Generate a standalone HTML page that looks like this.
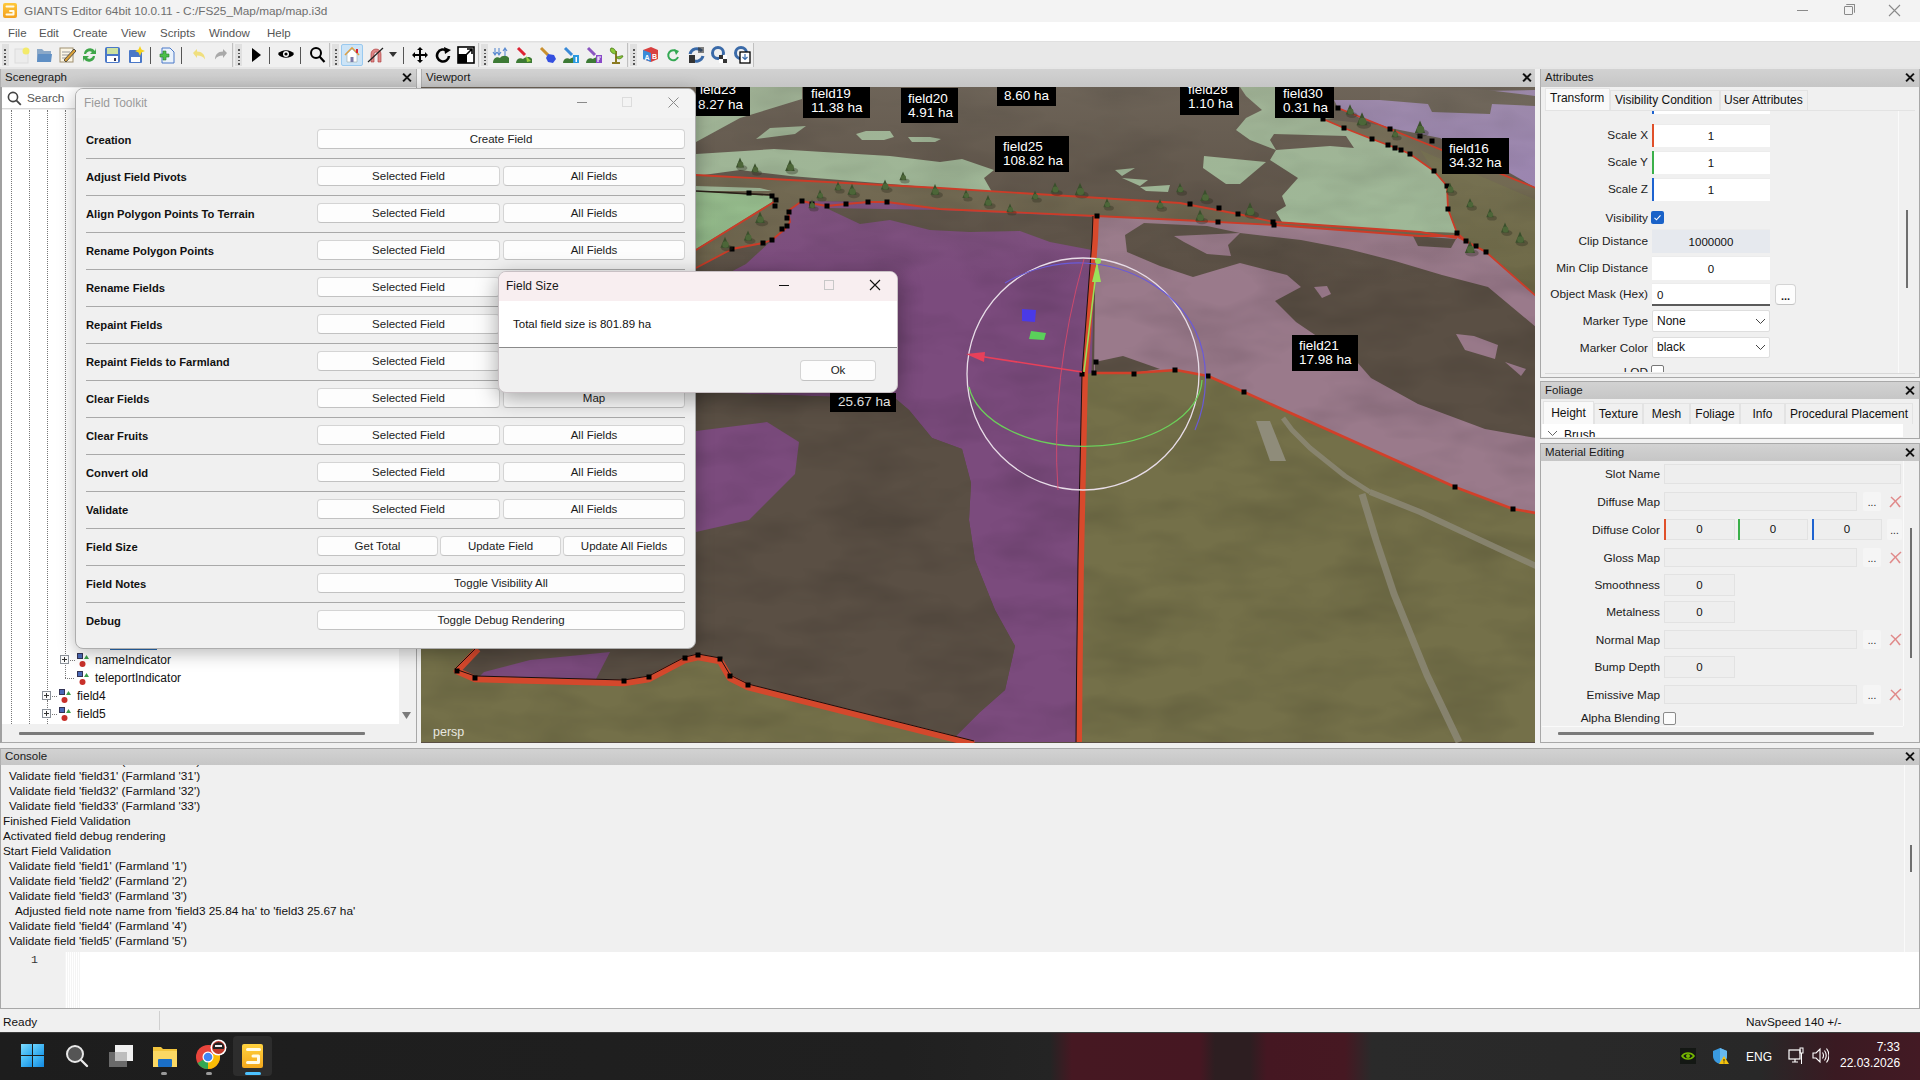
<!DOCTYPE html>
<html><head><meta charset="utf-8"><title>GIANTS Editor</title>
<style>
*{margin:0;padding:0;box-sizing:border-box}
html,body{width:1920px;height:1080px;overflow:hidden;background:#f0f0f0;font-family:"Liberation Sans",sans-serif;font-size:11.5px;color:#000}
.a{position:absolute}
.t{position:absolute;white-space:nowrap;line-height:14px}
.dh{position:absolute;height:18px;background:linear-gradient(#d2d2d2,#c6c6c6);color:#1a1a1a;border-top:1px solid #a9a9a9;border-left:1px solid #b0b0b0;border-right:1px solid #b0b0b0}
.dh span{position:absolute;left:4px;top:2px;font-size:11.5px}
.dx{position:absolute;top:4px;width:9px;height:9px}
.dx:before,.dx:after{content:"";position:absolute;left:3.5px;top:-1px;width:2px;height:11px;background:#111;transform:rotate(45deg)}
.dx:after{transform:rotate(-45deg)}
.btn{position:absolute;height:20px;background:#fdfdfd;border:1px solid #d4d4d4;border-bottom-color:#c2c2c2;border-radius:4px;text-align:center;line-height:19px;font-size:11.5px;color:#1b1b1b}
.lbl{position:absolute;font-weight:bold;font-size:11.2px;color:#111;white-space:nowrap}
.sep{position:absolute;height:1px;background:#a9a9a9}
.rl{position:absolute;text-align:right;white-space:nowrap;color:#1b1b1b}
.inp{position:absolute;background:#fff;border:1px solid #e3e3e3;text-align:center;line-height:20px;color:#1b1b1b}
.dis{position:absolute;background:#eeeeee;border:1px solid #e2e2e2;text-align:center;line-height:20px;color:#1b1b1b}
.tbi{position:absolute;top:46px;width:17px;height:17px}
.tsep{position:absolute;top:45px;width:1px;height:20px;background:#c8c8c8}
.th{position:absolute;top:46px;width:2px;height:18px;background:repeating-linear-gradient(#555 0 1.5px,transparent 1.5px 3.5px)}
.cl{position:absolute;left:3px;white-space:nowrap;color:#1b1b1b;font-size:11.5px}
.tab{position:absolute;height:22px;border:1px solid #e2e2e2;border-bottom:none;background:#f0f0f0;color:#1b1b1b;text-align:center;line-height:20px}

</style></head><body>
<!-- title bar -->
<div class="a" style="left:0;top:0;width:1920px;height:22px;background:#f3f3f3"></div>
<div class="a" style="left:3px;top:3px;width:14px;height:15px;background:linear-gradient(#ffc83a,#f2a01e);border-radius:2px"></div>
<svg class="a" style="left:3px;top:3px" width="14" height="15"><path d="M3.5 3.5H10.5M7 8H10.5V11.5H3.5" fill="none" stroke="#fffbe8" stroke-width="2" stroke-linecap="round" stroke-linejoin="round"/></svg>
<div class="t" style="left:24px;top:4px;font-size:11.8px;color:#6e6e6e">GIANTS Editor 64bit 10.0.11 - C:/FS25_Map/map/map.i3d</div>
<div class="a" style="left:1797px;top:10px;width:11px;height:1px;background:#8a8a8a"></div>
<div class="a" style="left:1844px;top:6px;width:9px;height:9px;border:1px solid #8a8a8a;border-radius:1px"></div>
<div class="a" style="left:1846px;top:4px;width:9px;height:9px;border-top:1px solid #8a8a8a;border-right:1px solid #8a8a8a;border-radius:1px"></div>
<svg class="a" style="left:1888px;top:4px" width="13" height="13"><path d="M1 1L12 12M12 1L1 12" stroke="#8a8a8a" stroke-width="1.1"/></svg>
<!-- menu bar -->
<div class="a" style="left:0;top:22px;width:1920px;height:19px;background:#ffffff"></div>
<div class="t" style="left:8px;top:26px;color:#555">File</div>
<div class="t" style="left:39px;top:26px;color:#555">Edit</div>
<div class="t" style="left:73px;top:26px;color:#555">Create</div>
<div class="t" style="left:121px;top:26px;color:#555">View</div>
<div class="t" style="left:160px;top:26px;color:#555">Scripts</div>
<div class="t" style="left:209px;top:26px;color:#555">Window</div>
<div class="t" style="left:267px;top:26px;color:#555">Help</div>
<!-- toolbar background -->
<div class="a" style="left:0;top:41px;width:1920px;height:28px;background:#e8e8e8;border-top:1px solid #e0e0e0"></div>
<!-- dock headers -->
<div class="dh" style="left:0;top:68px;width:417px;height:19px"><span>Scenegraph</span><i class="dx" style="left:401px"></i></div>
<div class="dh" style="left:421px;top:68px;width:1115px;height:19px"><span>Viewport</span><i class="dx" style="left:1100px"></i></div>
<div class="dh" style="left:1540px;top:68px;width:380px;height:19px"><span>Attributes</span><i class="dx" style="left:364px"></i></div>

<!-- toolbar groups -->
<div class="a" style="left:0;top:43px;width:233px;height:24px;background:#f0f0f0;border-right:1px solid #c0c0c0"></div>
<div class="a" style="left:234px;top:43px;width:96px;height:24px;background:#f0f0f0;border-right:1px solid #c0c0c0"></div>
<div class="a" style="left:331px;top:43px;width:148px;height:24px;background:#f0f0f0;border-right:1px solid #c0c0c0"></div>
<div class="a" style="left:480px;top:43px;width:148px;height:24px;background:#f0f0f0;border-right:1px solid #c0c0c0"></div>
<div class="a" style="left:629px;top:43px;width:125px;height:24px;background:#f0f0f0;border-right:1px solid #c0c0c0"></div>
<div class="a" style="left:0;top:67px;width:1920px;height:2px;background:#e6e6e6"></div>
<!-- handles -->
<div class="a" style="left:2px;top:44px;width:7px;height:22px;background:#e0e0e0"></div>
<div class="th" style="left:4px;top:49px;height:16px"></div>
<div class="a" style="left:235px;top:44px;width:7px;height:22px;background:#e0e0e0"></div>
<div class="th" style="left:238px;top:49px;height:16px"></div>
<div class="a" style="left:332px;top:44px;width:7px;height:22px;background:#e0e0e0"></div>
<div class="th" style="left:335px;top:49px;height:16px"></div>
<div class="a" style="left:481px;top:44px;width:7px;height:22px;background:#e0e0e0"></div>
<div class="th" style="left:484px;top:49px;height:16px"></div>
<div class="a" style="left:630px;top:44px;width:7px;height:22px;background:#e0e0e0"></div>
<div class="th" style="left:633px;top:49px;height:16px"></div>
<!-- separators -->
<div class="tsep" style="left:150px;top:47px;height:17px;background:#555"></div>
<div class="tsep" style="left:181px;top:47px;height:17px;background:#555"></div>
<div class="tsep" style="left:269px;top:47px;height:17px;background:#555"></div>
<div class="tsep" style="left:300px;top:47px;height:17px;background:#555"></div>
<div class="tsep" style="left:403px;top:47px;height:17px;background:#555"></div>
<!-- icons group 1 -->
<svg class="a" style="left:14px;top:46px" width="17" height="18"><rect x="1" y="3" width="13" height="14" fill="#ececec" stroke="#dcdcdc"/><circle cx="12" cy="5" r="3.5" fill="#f3ea6a"/></svg>
<svg class="a" style="left:36px;top:46px" width="17" height="18"><path d="M1 3h5l2 2h7v11H1z" fill="#8aa8c8"/><path d="M2 8h14l-1 8H1z" fill="#5f8fc4"/></svg>
<svg class="a" style="left:59px;top:46px" width="17" height="18"><rect x="1" y="2" width="13" height="14" fill="#fbf6e6" stroke="#a09070"/><path d="M3 6h8M3 9h7M3 12h6" stroke="#999"/><path d="M5 14L15 3l2 2L7 16z" fill="#d9a13a" stroke="#333" stroke-width=".8"/></svg>
<svg class="a" style="left:81px;top:46px" width="17" height="18"><path d="M3 8a6 6 0 0 1 11-3l1-3v6h-6l2-2a4 4 0 0 0-6 2z" fill="#3fa64a"/><path d="M14 10a6 6 0 0 1-11 3l-1 3v-6h6l-2 2a4 4 0 0 0 6-2z" fill="#3fa64a"/></svg>
<svg class="a" style="left:104px;top:46px" width="17" height="18"><rect x="1" y="1" width="15" height="16" rx="2" fill="#4a78c8"/><rect x="3" y="2" width="11" height="6" fill="#cde2a0"/><rect x="3" y="10" width="11" height="6" fill="#fff"/><rect x="10" y="12" width="2" height="3" fill="#335"/></svg>
<svg class="a" style="left:128px;top:46px" width="17" height="18"><rect x="1" y="4" width="13" height="13" rx="1" fill="#4a78c8"/><rect x="3" y="11" width="9" height="5" fill="#fff"/><path d="M12 0l1.5 3.5L17 5l-3.5 1.5L12 10l-1.5-3.5L7 5l3.5-1.5z" fill="#f5d320"/></svg>
<svg class="a" style="left:158px;top:46px" width="17" height="18"><path d="M4 2h8l4 4v11H4z" fill="#eaf2fb" stroke="#4a78c8"/><path d="M5 5h3v3h3v3H8v3H5v-3H2V8h3z" fill="#4bbf4b" stroke="#2a7a2a" stroke-width=".6"/></svg>
<svg class="a" style="left:190px;top:46px" width="17" height="18"><path d="M3 7l4-4v2.5c5 0 8 3 8 8-2-3-4-4-8-4V12z" fill="#f0dc6a" opacity=".85"/></svg>
<svg class="a" style="left:213px;top:46px" width="17" height="18"><path d="M14 7l-4-4v2.5c-5 0-8 3-8 8 2-3 4-4 8-4V12z" fill="#a9a9a9"/></svg>
<!-- group 2 -->
<svg class="a" style="left:251px;top:47px" width="11" height="16"><path d="M1 1l9 7-9 7z" fill="#000"/></svg>
<svg class="a" style="left:277px;top:48px" width="18" height="12"><path d="M1 6c3-5 13-5 16 0-3 5-13 5-16 0z" fill="#000"/><circle cx="9" cy="6" r="3" fill="#fff"/><circle cx="9" cy="6" r="1.6" fill="#000"/></svg>
<svg class="a" style="left:309px;top:46px" width="17" height="18"><circle cx="7" cy="7" r="5" fill="none" stroke="#000" stroke-width="2"/><path d="M10.5 10.5l5 5.5" stroke="#000" stroke-width="2.2"/></svg>
<!-- group 3 -->
<div class="a" style="left:341px;top:44px;width:22px;height:22px;background:#cce4f7;border:1px solid #99c9ef;border-radius:2px"></div>
<svg class="a" style="left:343px;top:46px" width="18" height="18"><path d="M2 9L9 2l7 7" fill="none" stroke="#e0a040" stroke-width="1.6"/><path d="M4 8v8h10V8L9 3z" fill="#fff" stroke="#9aa" stroke-width=".6"/><rect x="7.5" y="11" width="3" height="5" fill="#7a7aa8"/><rect x="13" y="3" width="2" height="4" fill="#d23"/></svg>
<svg class="a" style="left:367px;top:46px" width="17" height="18"><path d="M4 16V8a5 5 0 0 1 10 0v8h-3V8a2 2 0 0 0-4 0v8z" fill="#d88" stroke="#a33" stroke-width=".6"/><path d="M1 16L16 2" stroke="#222" stroke-width="1.2"/></svg>
<svg class="a" style="left:389px;top:52px" width="9" height="6"><path d="M0 0h8L4 5z" fill="#333"/></svg>
<svg class="a" style="left:411px;top:46px" width="18" height="18"><path d="M9 1l3 3h-2v4h4V6l3 3-3 3v-2h-4v4h2l-3 3-3-3h2v-4H4v2L1 9l3-3v2h4V4H6z" fill="#000"/></svg>
<svg class="a" style="left:435px;top:46px" width="17" height="18"><path d="M12 5A6 6 0 1 0 14 10" fill="none" stroke="#000" stroke-width="2.6"/><path d="M9 1l7 3-6 4z" fill="#000"/></svg>
<svg class="a" style="left:457px;top:46px" width="18" height="18"><rect x="1" y="1" width="16" height="16" fill="#fff" stroke="#000" stroke-width="1.6"/><path d="M1 17V8h9v9z" fill="#000"/><path d="M7 11l8-8M10 3h5v5" fill="none" stroke="#000" stroke-width="1.6"/></svg>
<!-- group 4 -->
<svg class="a" style="left:492px;top:46px" width="18" height="18"><path d="M1 17c0-5 4-7 7-5 2-3 7-3 9 0v5z" fill="#3d7a35"/><path d="M3 2v6M1 6l2 3 2-3M7 2v6M5 6l2 3 2-3M13 10V3M11 5l2-3 2 3" fill="none" stroke="#5a8ad0" stroke-width="1.1"/></svg>
<svg class="a" style="left:515px;top:46px" width="18" height="18"><path d="M1 17c0-4 4-6 7-4 2-2 7-3 9 0v4z" fill="#3d7a35"/><path d="M3 2l7 7" stroke="#d23" stroke-width="3"/><path d="M11 10l5 5-4 1z" fill="#9ad040"/></svg>
<svg class="a" style="left:539px;top:46px" width="18" height="18"><path d="M2 2l7 7" stroke="#c99030" stroke-width="3"/><path d="M9 8l6 1 2 4-3 4-5-1-2-4z" fill="#3550e0"/></svg>
<svg class="a" style="left:562px;top:46px" width="18" height="18"><path d="M1 17c0-4 4-6 7-4 2-2 5-2 6 0v4z" fill="#3d7a35"/><path d="M3 2l7 7" stroke="#3a8ad8" stroke-width="3"/><rect x="11" y="9" width="6" height="8" fill="#2a9ae0"/><rect x="13.5" y="11" width="1.5" height="5" fill="#fff"/></svg>
<svg class="a" style="left:585px;top:46px" width="18" height="18"><path d="M1 17c0-4 4-6 7-4 2-2 5-2 6 0v4z" fill="#3d7a35"/><path d="M3 2l7 7" stroke="#8a55c0" stroke-width="3"/><rect x="11" y="9" width="6" height="8" fill="#8a4ac8"/><path d="M13 16v-5h3M13 13h2" stroke="#fff" stroke-width="1.2" fill="none"/></svg>
<svg class="a" style="left:608px;top:46px" width="17" height="18"><path d="M4 17h8M8 17V5" stroke="#8a7a20" stroke-width="2"/><path d="M8 8c-4 0-7-3-5-6 3 0 5 2 5 6zM8 11c3 0 6-2 7-1-1 3-5 4-7 1z" fill="#8ac838" stroke="#4a7a18" stroke-width=".8"/></svg>
<!-- group 5 -->
<svg class="a" style="left:642px;top:46px" width="17" height="17"><path d="M1 4l8-3 7 3v9l-7 3-8-3z" fill="#d84040"/><path d="M1 4l8 3v9l-8-3z" fill="#3a8ad8"/><text x="2.5" y="14" font-size="7" fill="#fff" font-weight="bold" font-family="Liberation Sans">A</text><text x="10" y="13" font-size="7" fill="#fff" font-weight="bold" font-family="Liberation Sans">B</text></svg>
<svg class="a" style="left:666px;top:48px" width="14" height="14"><path d="M11 4A5 5 0 1 0 12 9" fill="none" stroke="#34a853" stroke-width="2"/><path d="M8 1l5 2-3 4z" fill="#34a853"/></svg>
<svg class="a" style="left:688px;top:46px" width="17" height="18"><path d="M2 8a7 7 0 0 1 12-3" fill="none" stroke="#3a6aa8" stroke-width="3"/><path d="M15 10a7 7 0 0 1-12 3" fill="none" stroke="#3a6aa8" stroke-width="3"/><rect x="1" y="9" width="6" height="8" fill="#333"/><rect x="10" y="1" width="6" height="6" fill="#333" opacity=".6"/></svg>
<svg class="a" style="left:711px;top:46px" width="17" height="18"><circle cx="7" cy="7" r="5.5" fill="none" stroke="#3a6aa8" stroke-width="3"/><rect x="8" y="9" width="8" height="8" fill="#fff"/><path d="M8 9h4v4H8zM12 13h4v4h-4z" fill="#333"/></svg>
<svg class="a" style="left:734px;top:46px" width="17" height="18"><circle cx="7" cy="7" r="5.5" fill="none" stroke="#3a6aa8" stroke-width="3"/><rect x="6" y="6" width="10" height="11" fill="#fff" stroke="#000" stroke-width="1.3"/><path d="M11 8v5M8.5 11l2.5 2.5 2.5-2.5" fill="none" stroke="#3a6aa8" stroke-width="1.2"/></svg>

<!-- scenegraph panel -->
<div class="a" style="left:0;top:87px;width:417px;height:656px;background:#f0f0f0;border-left:2px solid #a0a0a0;border-right:1px solid #a8a8a8;border-bottom:1px solid #a8a8a8"></div>
<div class="a" style="left:2px;top:88px;width:398px;height:21px;background:#fff;border-bottom:1px solid #d8d8d8"></div>
<svg class="a" style="left:7px;top:91px" width="15" height="15"><circle cx="6" cy="6" r="4.6" fill="none" stroke="#444" stroke-width="1.6"/><path d="M9.3 9.3l4.5 4.5" stroke="#444" stroke-width="1.8"/></svg>
<div class="t" style="left:27px;top:91px;color:#555;font-size:11.8px">Search</div>
<div class="a" style="left:2px;top:110px;width:397px;height:614px;background:#fff"></div>
<div class="a" style="left:11px;top:110px;width:1px;height:614px;border-left:1px dotted #777"></div>
<div class="a" style="left:29px;top:110px;width:1px;height:614px;border-left:1px dotted #777"></div>
<div class="a" style="left:47px;top:110px;width:1px;height:582px;border-left:1px dotted #777"></div>
<div class="a" style="left:47px;top:700px;width:1px;height:24px;border-left:1px dotted #777"></div>
<div class="a" style="left:65px;top:110px;width:1px;height:568px;border-left:1px dotted #777"></div>
<div class="a" style="left:65px;top:678px;width:9px;height:1px;border-top:1px dotted #777"></div>
<div class="a" style="left:70px;top:660px;width:5px;height:1px;border-top:1px dotted #777"></div>
<div class="a" style="left:52px;top:696px;width:5px;height:1px;border-top:1px dotted #777"></div>
<div class="a" style="left:52px;top:714px;width:5px;height:1px;border-top:1px dotted #777"></div>
<div class="a" style="left:110px;top:647px;width:47px;height:3px;background:#2a6bb0"></div>
<!-- expanders -->
<div class="a" style="left:60px;top:655px;width:9px;height:9px;border:1px solid #8a9098;background:#fbfbfb"></div>
<div class="a" style="left:62px;top:659px;width:5px;height:1px;background:#333"></div><div class="a" style="left:64px;top:657px;width:1px;height:5px;background:#333"></div>
<div class="a" style="left:42px;top:691px;width:9px;height:9px;border:1px solid #8a9098;background:#fbfbfb"></div>
<div class="a" style="left:44px;top:695px;width:5px;height:1px;background:#333"></div><div class="a" style="left:46px;top:693px;width:1px;height:5px;background:#333"></div>
<div class="a" style="left:42px;top:709px;width:9px;height:9px;border:1px solid #8a9098;background:#fbfbfb"></div>
<div class="a" style="left:44px;top:713px;width:5px;height:1px;background:#333"></div><div class="a" style="left:46px;top:711px;width:1px;height:5px;background:#333"></div>
<!-- node icons -->
<svg class="a" style="left:77px;top:653px" width="13" height="15"><rect x="0.5" y="0.5" width="5" height="5" fill="#4a6ab8" stroke="#335"/><path d="M7 6l2.5-4 2.5 4z" fill="#3aa04a"/><circle cx="5.5" cy="11" r="3" fill="#c8302a"/></svg>
<svg class="a" style="left:77px;top:671px" width="13" height="15"><rect x="0.5" y="0.5" width="5" height="5" fill="#4a6ab8" stroke="#335"/><path d="M7 6l2.5-4 2.5 4z" fill="#3aa04a"/><circle cx="5.5" cy="11" r="3" fill="#c8302a"/></svg>
<svg class="a" style="left:59px;top:689px" width="13" height="15"><rect x="0.5" y="0.5" width="5" height="5" fill="#4a6ab8" stroke="#335"/><path d="M7 6l2.5-4 2.5 4z" fill="#3aa04a"/><circle cx="5.5" cy="11" r="3" fill="#c8302a"/></svg>
<svg class="a" style="left:59px;top:707px" width="13" height="15"><rect x="0.5" y="0.5" width="5" height="5" fill="#4a6ab8" stroke="#335"/><path d="M7 6l2.5-4 2.5 4z" fill="#3aa04a"/><circle cx="5.5" cy="11" r="3" fill="#c8302a"/></svg>
<div class="t" style="left:95px;top:653px;font-size:12px;color:#111">nameIndicator</div>
<div class="t" style="left:95px;top:671px;font-size:12px;color:#111">teleportIndicator</div>
<div class="t" style="left:77px;top:689px;font-size:12px;color:#111">field4</div>
<div class="t" style="left:77px;top:707px;font-size:12px;color:#111">field5</div>
<!-- scrollbars -->
<div class="a" style="left:399px;top:110px;width:17px;height:614px;background:#f0f0f0"></div>
<svg class="a" style="left:402px;top:712px" width="10" height="8"><path d="M0 0h9L4.5 7z" fill="#7a7a7a"/></svg>
<div class="a" style="left:19px;top:732px;width:346px;height:3px;background:#7a7a7a;border-radius:1px"></div>
<!-- gap between scenegraph & viewport -->
<div class="a" style="left:417px;top:69px;width:4px;height:674px;background:#f0f0f0"></div>

<svg class="a" style="left:421px;top:87px" width="1114" height="656" viewBox="421 87 1114 656">
<defs><filter id="nz" x="0" y="0" width="100%" height="100%"><feTurbulence type="fractalNoise" baseFrequency="0.012 0.03" numOctaves="3" seed="4"/><feColorMatrix type="matrix" values="0 0 0 0 0  0 0 0 0 0  0 0 0 0 0  0 0 0 .9 -.35"/></filter></defs>
<rect x="421" y="87" width="1114" height="656" fill="#5a4f44"/>
<polygon points="696,87 802,87 802,99 740,118 696,142" fill="#9fba98" />
<polygon points="696,154 774,149 890,156 940,162 962,159 994,170 984,178 992,192 940,188 790,176 740,170 696,176" fill="#9fba98" />
<polygon points="756,139 770,128 806,126 795,134" fill="#9fba98" />
<polygon points="856,134 866,131 890,131 894,137 884,140 862,140" fill="#9fba98" />
<polygon points="908,137 930,137 941,139 935,142 912,142" fill="#9fba98" />
<polygon points="1115,170 1135,168 1122,176" fill="#9fba98" />
<polygon points="1122,178 1148,180 1140,186" fill="#9fba98" />
<polygon points="1140,187 1170,185 1168,192 1146,191" fill="#9fba98" />
<polygon points="1240,87 1334,87 1334,118 1323,119 1344,128 1372,139 1388,145 1401,150 1410,154 1434,171 1447,186 1448,209 1457,233 1420,232 1282,222 1276,212 1286,206 1282,196 1298,178 1270,160 1276,150 1250,140 1236,130 1246,118 1262,110 1246,96" fill="#9fba98" />
<polygon points="1274,134 1346,136 1354,148 1330,146 1276,150 1270,140" fill="#5a4f44" />
<polygon points="1204,156 1266,162 1240,184 1226,184 1203,168" fill="#9fba98" />
<polygon points="1334,100 1380,100 1420,92 1536,90 1536,188 1508,172 1440,138 1390,128 1360,118 1338,108" fill="#9b83b5" />
<polygon points="1380,88 1470,88 1536,96 1536,106 1492,104 1490,114 1432,112 1428,104 1380,100" fill="#5f554a" />
<polygon points="1323,119 1380,125 1536,188 1536,296 1486,252 1466,241 1457,233 1448,209 1447,186 1434,171 1410,154 1386,144 1344,128" fill="#6c634b" />
<polygon points="1420,150 1536,200 1536,296 1486,252 1466,241 1457,233 1448,209 1447,186 1434,171" fill="#6f6a48" />
<polygon points="696,175 940,188 1180,203 1238,214 1274,222 1420,232 1457,233 1457,238 1420,236 1274,225 1180,220 1096,216 940,209 887,202 802,201 788,211 790,222 785,229 772,240 732,249 696,268" fill="#6c634b" />
<polygon points="696,191 772,196 772,202 696,249" fill="#93bd8b" />
<polygon points="696,186 760,188 772,191 696,191" fill="#9fba98" />
<polygon points="746,264 772,240 785,229 790,222 788,211 802,201 887,202 940,209 1096,216 1081,742 950,742 980,712 1005,690 1015,646 995,610 975,560 969,520 971,483 962,449 932,438 909,410 896,399 696,392 696,290" fill="#7b4b7d" />
<polygon points="826,208 940,210 1096,217 1092,250 1050,242 1020,231 970,232 930,230 890,220 860,224" fill="#5a4f44" />
<polygon points="1096,216 1180,220 1274,225 1420,236 1456,236 1486,252 1536,296 1536,513 1513,509 1455,487 1244,392 1208,376 1176,370 1134,373 1094,373" fill="#9a7a8b" />
<polygon points="1125,235 1144,223 1207,226 1240,233 1301,240 1348,249 1395,261 1442,275 1488,287 1536,327 1536,438 1485,429 1418,404 1371,378 1357,362 1324,341 1296,322 1275,301 1301,287 1287,275 1240,263 1193,277 1160,266 1127,252" fill="#5a4f44" />
<polygon points="1174,236 1240,233 1228,245 1231,256 1207,254 1184,242" fill="#9a7a8b" />
<polygon points="1314,287 1327,286 1331,294 1322,298" fill="#9a7a8b" />
<polygon points="1456,334 1474,336 1498,345 1495,359 1465,350" fill="#9a7a8b" />
<polygon points="1505,362 1526,369 1521,376" fill="#9a7a8b" />
<polygon points="1413,236 1456,239 1451,248 1418,246" fill="#5a4f44" />
<polygon points="1095,362 1123,356 1160,369 1134,373 1095,373" fill="#5a4f44" />
<polygon points="421,560 696,392 896,399 909,410 932,438 962,449 971,483 969,520 975,560 995,610 1015,646 1005,690 980,712 950,742 421,742" fill="#5a4f44" />
<polygon points="696,431 767,422 799,442 795,474 749,520 696,532" fill="#7b4b7d" />
<polygon points="484,672 530,660 610,652 595,681 478,678" fill="#7b4b7d" />
<polygon points="1081,742 1082,374 1094,373 1134,373 1176,370 1208,376 1244,392 1455,487 1513,509 1536,513 1536,742" fill="#747049" />
<polygon points="421,649 478,649 457,671 475,678 624,681 649,677 685,658 698,655 720,659 730,676 748,685 974,742 421,742" fill="#747049" />
<rect x="421" y="87" width="1114" height="656" filter="url(#nz)" opacity=".25"/>
<defs><linearGradient id="hz" x1="0" y1="0" x2="0" y2="1"><stop offset="0" stop-color="#a09a8c" stop-opacity=".28"/><stop offset="0.12" stop-color="#a09a8c" stop-opacity=".14"/><stop offset="0.3" stop-color="#a09a8c" stop-opacity="0"/></linearGradient></defs>
<rect x="421" y="87" width="1114" height="656" fill="url(#hz)"/>
<polyline points="1283,418 1292,430 1310,448 1345,476 1370,492" fill="none" stroke="#8d8a78" stroke-width="5" stroke-linejoin="round" opacity=".8"/>
<polyline points="1362,494 1376,540 1394,594 1427,675 1459,742" fill="none" stroke="#8d8a78" stroke-width="7" stroke-linejoin="round" opacity=".8"/>
<polyline points="1370,492 1420,512 1480,540 1536,566" fill="none" stroke="#8d8a78" stroke-width="6" stroke-linejoin="round" opacity=".8"/>
<polygon points="1256,421 1270,421 1286,461 1270,461" fill="#8f8c7a" />
<polyline points="696,175 940,188 1180,203 1238,214 1274,222 1420,232 1457,238" fill="none" stroke="#cc3c28" stroke-width="1.8" stroke-linejoin="round" />
<polyline points="696,268 732,249 763,243 772,240 785,229 790,222 788,211 802,201 815,204 827,206 846,204 868,202 887,202 940,209 1096,216 1180,220 1274,225 1420,236 1456,236 1486,252 1536,296" fill="none" stroke="#cc3c28" stroke-width="1.8" stroke-linejoin="round" />
<polyline points="696,191 772,195" fill="none" stroke="#2a2018" stroke-width="1.6" stroke-linejoin="round" />
<polyline points="696,250 774,202" fill="none" stroke="#cc3c28" stroke-width="1.8" stroke-linejoin="round" />
<polyline points="1323,119 1344,128 1372,139 1388,145 1401,150 1410,154 1434,171 1447,186 1448,209 1457,233 1466,241 1486,252" fill="none" stroke="#cc3c28" stroke-width="1.8" stroke-linejoin="round" />
<polyline points="1338,108 1380,125 1536,188" fill="none" stroke="#cc3c28" stroke-width="1.8" stroke-linejoin="round" />
<polyline points="1094,373 1134,373 1176,370 1208,376 1244,392 1455,487 1513,509 1536,513" fill="none" stroke="#d2402a" stroke-width="2.6" stroke-linejoin="round" />
<polyline points="1096,216 1095,240 1085,374 1081,560 1079.5,680 1079,742" fill="none" stroke="#d8492c" stroke-width="6" stroke-linejoin="round" />
<polyline points="1093,216 1092,240 1082,374 1078,560 1076.5,680 1076,742" fill="none" stroke="#1a1010" stroke-width="1" stroke-linejoin="round" />
<polyline points="478,649 457,671 475,679 624,683 649,679 685,660 698,657 720,661 730,678 748,687 974,744" fill="none" stroke="#d4482c" stroke-width="6.5" stroke-linejoin="round" />
<polyline points="478,646 455,669 475,676 624,680 649,676 685,657 698,654 720,658 730,675 748,684 974,741" fill="none" stroke="#1a1010" stroke-width="1" stroke-linejoin="round" />
<rect x="746.5" y="190.5" width="5" height="5" fill="#000"/>
<rect x="769.5" y="193.5" width="5" height="5" fill="#000"/>
<rect x="773.5" y="197.5" width="5" height="5" fill="#000"/>
<rect x="772.5" y="203.5" width="5" height="5" fill="#000"/>
<rect x="786.5" y="209.5" width="5" height="5" fill="#000"/>
<rect x="784.5" y="215.5" width="5" height="5" fill="#000"/>
<rect x="784.5" y="223.5" width="5" height="5" fill="#000"/>
<rect x="779.5" y="226.5" width="5" height="5" fill="#000"/>
<rect x="769.5" y="237.5" width="5" height="5" fill="#000"/>
<rect x="760.5" y="240.5" width="5" height="5" fill="#000"/>
<rect x="729.5" y="246.5" width="5" height="5" fill="#000"/>
<rect x="799.5" y="198.5" width="5" height="5" fill="#000"/>
<rect x="809.5" y="201.5" width="5" height="5" fill="#000"/>
<rect x="824.5" y="203.5" width="5" height="5" fill="#000"/>
<rect x="843.5" y="201.5" width="5" height="5" fill="#000"/>
<rect x="865.5" y="199.5" width="5" height="5" fill="#000"/>
<rect x="884.5" y="199.5" width="5" height="5" fill="#000"/>
<rect x="1094.5" y="213.5" width="5" height="5" fill="#000"/>
<rect x="1270.5" y="219.5" width="5" height="5" fill="#000"/>
<rect x="1187.5" y="201.5" width="5" height="5" fill="#000"/>
<rect x="1216.5" y="205.5" width="5" height="5" fill="#000"/>
<rect x="1235.5" y="211.5" width="5" height="5" fill="#000"/>
<rect x="1215.5" y="219.5" width="5" height="5" fill="#000"/>
<rect x="1271.5" y="222.5" width="5" height="5" fill="#000"/>
<rect x="1320.5" y="116.5" width="5" height="5" fill="#000"/>
<rect x="1335.5" y="105.5" width="5" height="5" fill="#000"/>
<rect x="1341.5" y="125.5" width="5" height="5" fill="#000"/>
<rect x="1369.5" y="136.5" width="5" height="5" fill="#000"/>
<rect x="1385.5" y="142.5" width="5" height="5" fill="#000"/>
<rect x="1392.5" y="145.5" width="5" height="5" fill="#000"/>
<rect x="1398.5" y="147.5" width="5" height="5" fill="#000"/>
<rect x="1407.5" y="151.5" width="5" height="5" fill="#000"/>
<rect x="1431.5" y="168.5" width="5" height="5" fill="#000"/>
<rect x="1444.5" y="183.5" width="5" height="5" fill="#000"/>
<rect x="1445.5" y="206.5" width="5" height="5" fill="#000"/>
<rect x="1454.5" y="230.5" width="5" height="5" fill="#000"/>
<rect x="1463.5" y="238.5" width="5" height="5" fill="#000"/>
<rect x="1473.5" y="243.5" width="5" height="5" fill="#000"/>
<rect x="1483.5" y="249.5" width="5" height="5" fill="#000"/>
<rect x="1387.5" y="126.5" width="5" height="5" fill="#000"/>
<rect x="1417.5" y="133.5" width="5" height="5" fill="#000"/>
<rect x="1429.5" y="138.5" width="5" height="5" fill="#000"/>
<rect x="1079.5" y="371.5" width="5" height="5" fill="#000"/>
<rect x="1091.5" y="370.5" width="5" height="5" fill="#000"/>
<rect x="1131.5" y="371.5" width="5" height="5" fill="#000"/>
<rect x="1172.5" y="367.5" width="5" height="5" fill="#000"/>
<rect x="1205.5" y="373.5" width="5" height="5" fill="#000"/>
<rect x="1241.5" y="389.5" width="5" height="5" fill="#000"/>
<rect x="1452.5" y="484.5" width="5" height="5" fill="#000"/>
<rect x="1510.5" y="506.5" width="5" height="5" fill="#000"/>
<rect x="1093.5" y="359.5" width="5" height="5" fill="#000"/>
<rect x="454.5" y="668.5" width="5" height="5" fill="#000"/>
<rect x="472.5" y="675.5" width="5" height="5" fill="#000"/>
<rect x="621.5" y="678.5" width="5" height="5" fill="#000"/>
<rect x="646.5" y="674.5" width="5" height="5" fill="#000"/>
<rect x="682.5" y="655.5" width="5" height="5" fill="#000"/>
<rect x="695.5" y="652.5" width="5" height="5" fill="#000"/>
<rect x="717.5" y="656.5" width="5" height="5" fill="#000"/>
<rect x="727.5" y="673.5" width="5" height="5" fill="#000"/>
<rect x="745.5" y="682.5" width="5" height="5" fill="#000"/>
<ellipse cx="742" cy="168" rx="5.4" ry="2.9" fill="#2a2a1e" opacity=".35"/>
<path d="M740 157.5 L744.1 167.5 L735.9 167.5z" fill="#3a4f2c"/>
<circle cx="740.5" cy="164.5" r="2.9" fill="#4c6638"/>
<ellipse cx="757" cy="173" rx="4.9" ry="2.7" fill="#2a2a1e" opacity=".35"/>
<path d="M755 163.2 L758.8 172.3 L751.2 172.3z" fill="#3a4f2c"/>
<circle cx="755.5" cy="169.5" r="2.7" fill="#4c6638"/>
<ellipse cx="792" cy="171" rx="6.2" ry="3.4" fill="#2a2a1e" opacity=".35"/>
<path d="M790 159.4 L794.8 170.9 L785.2 170.9z" fill="#3a4f2c"/>
<circle cx="790.5" cy="167.5" r="3.4" fill="#4c6638"/>
<ellipse cx="840" cy="191" rx="4.7" ry="2.6" fill="#2a2a1e" opacity=".35"/>
<path d="M838 181.4 L841.6 190.2 L834.4 190.2z" fill="#3a4f2c"/>
<circle cx="838.5" cy="187.5" r="2.6" fill="#4c6638"/>
<ellipse cx="854" cy="195" rx="5.9" ry="3.2" fill="#2a2a1e" opacity=".35"/>
<path d="M852 183.8 L856.6 194.7 L847.4 194.7z" fill="#3a4f2c"/>
<circle cx="852.5" cy="191.5" r="3.2" fill="#4c6638"/>
<ellipse cx="887" cy="190" rx="5.5" ry="3.0" fill="#2a2a1e" opacity=".35"/>
<path d="M885 179.4 L889.2 189.5 L880.8 189.5z" fill="#3a4f2c"/>
<circle cx="885.5" cy="186.5" r="3.0" fill="#4c6638"/>
<ellipse cx="905" cy="181" rx="4.7" ry="2.5" fill="#2a2a1e" opacity=".35"/>
<path d="M903 171.5 L906.6 180.2 L899.4 180.2z" fill="#3a4f2c"/>
<circle cx="903.5" cy="177.5" r="2.5" fill="#4c6638"/>
<ellipse cx="937" cy="195" rx="5.9" ry="3.2" fill="#2a2a1e" opacity=".35"/>
<path d="M935 183.9 L939.5 194.7 L930.5 194.7z" fill="#3a4f2c"/>
<circle cx="935.5" cy="191.5" r="3.2" fill="#4c6638"/>
<ellipse cx="968" cy="199" rx="4.6" ry="2.5" fill="#2a2a1e" opacity=".35"/>
<path d="M966 189.6 L969.6 198.1 L962.4 198.1z" fill="#3a4f2c"/>
<circle cx="966.5" cy="195.5" r="2.5" fill="#4c6638"/>
<ellipse cx="990" cy="206" rx="5.7" ry="3.1" fill="#2a2a1e" opacity=".35"/>
<path d="M988 195.1 L992.4 205.6 L983.6 205.6z" fill="#3a4f2c"/>
<circle cx="988.5" cy="202.5" r="3.1" fill="#4c6638"/>
<ellipse cx="1012" cy="213" rx="4.7" ry="2.5" fill="#2a2a1e" opacity=".35"/>
<path d="M1010 203.4 L1013.6 212.2 L1006.4 212.2z" fill="#3a4f2c"/>
<circle cx="1010.5" cy="209.5" r="2.5" fill="#4c6638"/>
<ellipse cx="1037" cy="200" rx="4.8" ry="2.6" fill="#2a2a1e" opacity=".35"/>
<path d="M1035 190.4 L1038.7 199.2 L1031.3 199.2z" fill="#3a4f2c"/>
<circle cx="1035.5" cy="196.5" r="2.6" fill="#4c6638"/>
<ellipse cx="1057" cy="193" rx="5.7" ry="3.0" fill="#2a2a1e" opacity=".35"/>
<path d="M1055 182.2 L1059.3 192.6 L1050.7 192.6z" fill="#3a4f2c"/>
<circle cx="1055.5" cy="189.5" r="3.0" fill="#4c6638"/>
<ellipse cx="1082" cy="195" rx="6.7" ry="3.6" fill="#2a2a1e" opacity=".35"/>
<path d="M1080 182.7 L1085.2 195.1 L1074.8 195.1z" fill="#3a4f2c"/>
<circle cx="1080.5" cy="191.5" r="3.6" fill="#4c6638"/>
<ellipse cx="1109" cy="208" rx="4.9" ry="2.6" fill="#2a2a1e" opacity=".35"/>
<path d="M1107 198.3 L1110.7 207.2 L1103.3 207.2z" fill="#3a4f2c"/>
<circle cx="1107.5" cy="204.5" r="2.6" fill="#4c6638"/>
<ellipse cx="1162" cy="209" rx="5.1" ry="2.8" fill="#2a2a1e" opacity=".35"/>
<path d="M1160 198.9 L1163.9 208.4 L1156.1 208.4z" fill="#3a4f2c"/>
<circle cx="1160.5" cy="205.5" r="2.8" fill="#4c6638"/>
<ellipse cx="1207" cy="201" rx="6.2" ry="3.3" fill="#2a2a1e" opacity=".35"/>
<path d="M1205 189.4 L1209.8 200.9 L1200.2 200.9z" fill="#3a4f2c"/>
<circle cx="1205.5" cy="197.5" r="3.3" fill="#4c6638"/>
<ellipse cx="1252" cy="215" rx="7.0" ry="3.8" fill="#2a2a1e" opacity=".35"/>
<path d="M1250 202.3 L1255.4 215.2 L1244.6 215.2z" fill="#3a4f2c"/>
<circle cx="1250.5" cy="211.5" r="3.8" fill="#4c6638"/>
<ellipse cx="1202" cy="221" rx="6.1" ry="3.3" fill="#2a2a1e" opacity=".35"/>
<path d="M1200 209.6 L1204.7 220.8 L1195.3 220.8z" fill="#3a4f2c"/>
<circle cx="1200.5" cy="217.5" r="3.3" fill="#4c6638"/>
<ellipse cx="1352" cy="115" rx="5.6" ry="3.0" fill="#2a2a1e" opacity=".35"/>
<path d="M1350 104.3 L1354.3 114.6 L1345.7 114.6z" fill="#3a4f2c"/>
<circle cx="1350.5" cy="111.5" r="3.0" fill="#4c6638"/>
<ellipse cx="1364" cy="125" rx="7.1" ry="3.8" fill="#2a2a1e" opacity=".35"/>
<path d="M1362 112.2 L1367.5 125.3 L1356.5 125.3z" fill="#3a4f2c"/>
<circle cx="1362.5" cy="121.5" r="3.8" fill="#4c6638"/>
<ellipse cx="1397" cy="138" rx="4.7" ry="2.5" fill="#2a2a1e" opacity=".35"/>
<path d="M1395 128.5 L1398.6 137.2 L1391.4 137.2z" fill="#3a4f2c"/>
<circle cx="1395.5" cy="134.5" r="2.5" fill="#4c6638"/>
<ellipse cx="1422" cy="133" rx="6.8" ry="3.7" fill="#2a2a1e" opacity=".35"/>
<path d="M1420 120.6 L1425.2 133.1 L1414.8 133.1z" fill="#3a4f2c"/>
<circle cx="1420.5" cy="129.5" r="3.7" fill="#4c6638"/>
<ellipse cx="1452" cy="193" rx="5.3" ry="2.9" fill="#2a2a1e" opacity=".35"/>
<path d="M1450 182.7 L1454.1 192.4 L1445.9 192.4z" fill="#3a4f2c"/>
<circle cx="1450.5" cy="189.5" r="2.9" fill="#4c6638"/>
<ellipse cx="1472" cy="208" rx="4.9" ry="2.7" fill="#2a2a1e" opacity=".35"/>
<path d="M1470 198.2 L1473.8 207.3 L1466.2 207.3z" fill="#3a4f2c"/>
<circle cx="1470.5" cy="204.5" r="2.7" fill="#4c6638"/>
<ellipse cx="1492" cy="218" rx="4.9" ry="2.6" fill="#2a2a1e" opacity=".35"/>
<path d="M1490 208.3 L1493.7 217.2 L1486.3 217.2z" fill="#3a4f2c"/>
<circle cx="1490.5" cy="214.5" r="2.6" fill="#4c6638"/>
<ellipse cx="1507" cy="233" rx="5.4" ry="2.9" fill="#2a2a1e" opacity=".35"/>
<path d="M1505 222.6 L1509.1 232.5 L1500.9 232.5z" fill="#3a4f2c"/>
<circle cx="1505.5" cy="229.5" r="2.9" fill="#4c6638"/>
<ellipse cx="1472" cy="253" rx="6.7" ry="3.6" fill="#2a2a1e" opacity=".35"/>
<path d="M1470 240.8 L1475.1 253.1 L1464.9 253.1z" fill="#3a4f2c"/>
<circle cx="1470.5" cy="249.5" r="3.6" fill="#4c6638"/>
<ellipse cx="1502" cy="163" rx="5.0" ry="2.7" fill="#2a2a1e" opacity=".35"/>
<path d="M1500 153.0 L1503.9 162.3 L1496.1 162.3z" fill="#3a4f2c"/>
<circle cx="1500.5" cy="159.5" r="2.7" fill="#4c6638"/>
<ellipse cx="1522" cy="243" rx="6.1" ry="3.3" fill="#2a2a1e" opacity=".35"/>
<path d="M1520 231.6 L1524.7 242.8 L1515.3 242.8z" fill="#3a4f2c"/>
<circle cx="1520.5" cy="239.5" r="3.3" fill="#4c6638"/>
<ellipse cx="762" cy="223" rx="6.2" ry="3.3" fill="#2a2a1e" opacity=".35"/>
<path d="M760 211.4 L764.8 222.9 L755.2 222.9z" fill="#3a4f2c"/>
<circle cx="760.5" cy="219.5" r="3.3" fill="#4c6638"/>
<ellipse cx="750" cy="241" rx="5.5" ry="3.0" fill="#2a2a1e" opacity=".35"/>
<path d="M748 230.4 L752.2 240.5 L743.8 240.5z" fill="#3a4f2c"/>
<circle cx="748.5" cy="237.5" r="3.0" fill="#4c6638"/>
<ellipse cx="727" cy="248" rx="6.0" ry="3.2" fill="#2a2a1e" opacity=".35"/>
<path d="M725 236.7 L729.6 247.8 L720.4 247.8z" fill="#3a4f2c"/>
<circle cx="725.5" cy="244.5" r="3.2" fill="#4c6638"/>
<ellipse cx="814" cy="209" rx="4.7" ry="2.5" fill="#2a2a1e" opacity=".35"/>
<path d="M812 199.5 L815.6 208.2 L808.4 208.2z" fill="#3a4f2c"/>
<circle cx="812.5" cy="205.5" r="2.5" fill="#4c6638"/>
<ellipse cx="822" cy="199" rx="4.7" ry="2.5" fill="#2a2a1e" opacity=".35"/>
<path d="M820 189.5 L823.6 198.2 L816.4 198.2z" fill="#3a4f2c"/>
<circle cx="820.5" cy="195.5" r="2.5" fill="#4c6638"/>
<ellipse cx="1182" cy="193" rx="5.1" ry="2.7" fill="#2a2a1e" opacity=".35"/>
<path d="M1180 183.0 L1183.9 192.3 L1176.1 192.3z" fill="#3a4f2c"/>
<circle cx="1180.5" cy="189.5" r="2.7" fill="#4c6638"/>
<ellipse cx="1083" cy="374" rx="116" ry="116" fill="none" stroke="#e8dde8" stroke-width="1.3"/>
<path d="M1005 283 C1030 268 1060 262 1084 263 C1130 265 1175 290 1195 330 C1210 360 1208 400 1195 430" fill="none" stroke="#6a5ad8" stroke-width="1.2"/>
<path d="M969 387 A117 68 0 0 0 1202 380" fill="none" stroke="#6ccf5a" stroke-width="1.3"/>
<path d="M1084 259 Q1050 380 1058 490" fill="none" stroke="#e04a6a" stroke-width="1" opacity=".8"/>
<line x1="1082" y1="372" x2="972" y2="355" stroke="#e8405a" stroke-width="1.6"/>
<polygon points="966,354 985,352 984,362" fill="#e8405a"/>
<line x1="1084" y1="372" x2="1097" y2="265" stroke="#9ae05a" stroke-width="1.6"/>
<polygon points="1097,262 1092,282 1101,282" fill="#9ae05a"/>
<circle cx="1098" cy="261" r="3" fill="#9ae05a"/>
<polygon points="1022,309 1036,310 1035,322 1022,321" fill="#4a3ae8"/>
<polygon points="1031,331 1046,333 1044,340 1029,339" fill="#5ad05a"/>
<rect x="696" y="87" width="54" height="29" fill="#000"/>
<text x="700" y="94" fill="#fff" font-family="Liberation Sans" font-size="13.5">ield23</text>
<text x="698" y="109" fill="#fff" font-family="Liberation Sans" font-size="13.5">8.27 ha</text>
<rect x="803" y="87" width="67" height="31" fill="#000"/>
<text x="811" y="98" fill="#fff" font-family="Liberation Sans" font-size="13.5">field19</text>
<text x="811" y="112" fill="#fff" font-family="Liberation Sans" font-size="13.5">11.38 ha</text>
<rect x="901" y="88" width="57" height="35" fill="#000"/>
<text x="908" y="103" fill="#fff" font-family="Liberation Sans" font-size="13.5">field20</text>
<text x="908" y="117" fill="#fff" font-family="Liberation Sans" font-size="13.5">4.91 ha</text>
<rect x="997" y="87" width="59" height="19" fill="#000"/>
<text x="1004" y="100" fill="#fff" font-family="Liberation Sans" font-size="13.5">8.60 ha</text>
<rect x="995" y="136" width="74" height="36" fill="#000"/>
<text x="1003" y="151" fill="#fff" font-family="Liberation Sans" font-size="13.5">field25</text>
<text x="1003" y="165" fill="#fff" font-family="Liberation Sans" font-size="13.5">108.82 ha</text>
<rect x="1180" y="87" width="59" height="28" fill="#000"/>
<text x="1188" y="94" fill="#fff" font-family="Liberation Sans" font-size="13.5">field28</text>
<text x="1188" y="108" fill="#fff" font-family="Liberation Sans" font-size="13.5">1.10 ha</text>
<rect x="1275" y="87" width="59" height="31" fill="#000"/>
<text x="1283" y="98" fill="#fff" font-family="Liberation Sans" font-size="13.5">field30</text>
<text x="1283" y="112" fill="#fff" font-family="Liberation Sans" font-size="13.5">0.31 ha</text>
<rect x="1442" y="138" width="67" height="36" fill="#000"/>
<text x="1449" y="153" fill="#fff" font-family="Liberation Sans" font-size="13.5">field16</text>
<text x="1449" y="167" fill="#fff" font-family="Liberation Sans" font-size="13.5">34.32 ha</text>
<rect x="1292" y="335" width="66" height="36" fill="#000"/>
<text x="1299" y="350" fill="#fff" font-family="Liberation Sans" font-size="13.5">field21</text>
<text x="1299" y="364" fill="#fff" font-family="Liberation Sans" font-size="13.5">17.98 ha</text>
<rect x="830" y="393" width="66" height="19" fill="#000"/>
<text x="838" y="406" fill="#fff" font-family="Liberation Sans" font-size="13.5">25.67 ha</text>
<text x="433" y="736" fill="#e8e8e0" font-family="Liberation Sans" font-size="12.5">persp</text>
</svg>
<div class="a" style="left:1535px;top:69px;width:5px;height:674px;background:#f0f0f0"></div>
<div class="a" style="left:1540px;top:87px;width:380px;height:291px;background:#f0f0f0;border-left:1px solid #a8a8a8;border-right:1px solid #a8a8a8;border-bottom:1px solid #a8a8a8"></div>
<div class="a" style="left:1545px;top:88px;width:65px;height:22px;background:#f9f9f9;border:1px solid #e6e6e6;border-bottom:none"></div>
<div class="t" style="left:1550px;top:91px;font-size:12px;color:#111">Transform</div>
<div class="a" style="left:1610px;top:90px;width:110px;height:20px;background:#f0f0f0;border:1px solid #e3e3e3;border-bottom:none"></div>
<div class="t" style="left:1615px;top:93px;font-size:12px;color:#111">Visibility Condition</div>
<div class="a" style="left:1720px;top:90px;width:88px;height:20px;background:#f0f0f0;border:1px solid #e3e3e3;border-bottom:none"></div>
<div class="t" style="left:1724px;top:93px;font-size:12px;color:#111">User Attributes</div>
<div class="a" style="left:1545px;top:110px;width:370px;height:1px;background:#e3e3e3"></div>
<div class="a" style="left:1898px;top:111px;width:1px;height:262px;background:#fafafa"></div>
<div class="a" style="left:1906px;top:210px;width:2px;height:78px;background:#6f6f6f"></div>
<div class="a" style="left:1652px;top:111px;width:118px;height:3px;background:#fff"></div>
<div class="a" style="left:1652px;top:111px;width:2px;height:3px;background:#1e63d0"></div>
<div class="a" style="left:1652px;top:124px;width:118px;height:23px;background:#fff;line-height:23px;text-align:center;color:#111;font-size:11.5px;border-top:1px solid #ececec">1</div>
<div class="a" style="left:1652px;top:124px;width:2px;height:23px;background:#e0502a"></div>
<div class="rl" style="left:1448px;width:200px;top:128px;font-size:11.8px;line-height:14px">Scale X</div>
<div class="a" style="left:1652px;top:151px;width:118px;height:23px;background:#fff;line-height:23px;text-align:center;color:#111;font-size:11.5px;border-top:1px solid #ececec">1</div>
<div class="a" style="left:1652px;top:151px;width:2px;height:23px;background:#3bb04a"></div>
<div class="rl" style="left:1448px;width:200px;top:155px;font-size:11.8px;line-height:14px">Scale Y</div>
<div class="a" style="left:1652px;top:178px;width:118px;height:23px;background:#fff;line-height:23px;text-align:center;color:#111;font-size:11.5px;border-top:1px solid #ececec">1</div>
<div class="a" style="left:1652px;top:178px;width:2px;height:23px;background:#1e63d0"></div>
<div class="rl" style="left:1448px;width:200px;top:182px;font-size:11.8px;line-height:14px">Scale Z</div>
<div class="rl" style="left:1448px;width:200px;top:211px;font-size:11.8px;line-height:14px">Visibility</div>
<div class="a" style="left:1651px;top:211px;width:13px;height:13px;background:#1a62c8;border-radius:2px"></div>
<svg class="a" style="left:1651px;top:211px" width="13" height="13"><path d="M3.5 6.8l2 2 4-4.5" fill="none" stroke="#fff" stroke-width="1.1"/></svg>
<div class="a" style="left:1652px;top:229px;width:118px;height:24px;background:#e6e9ee;line-height:24px;text-align:center;color:#111;font-size:11.5px;border-top:1px solid #ececec">1000000</div>
<div class="rl" style="left:1448px;width:200px;top:234px;font-size:11.8px;line-height:14px">Clip Distance</div>
<div class="a" style="left:1652px;top:256px;width:118px;height:24px;background:#fff;line-height:24px;text-align:center;color:#111;font-size:11.5px;border-top:1px solid #ececec">0</div>
<div class="rl" style="left:1448px;width:200px;top:261px;font-size:11.8px;line-height:14px">Min Clip Distance</div>
<div class="a" style="left:1652px;top:283px;width:118px;height:23px;background:#fff;line-height:23px;text-align:left;color:#111;font-size:11.5px;border-top:1px solid #ececec;border-bottom:2px solid #5a5a5a;padding-left:5px">0</div>
<div class="rl" style="left:1448px;width:200px;top:287px;font-size:11.8px;line-height:14px">Object Mask (Hex)</div>
<div class="btn" style="left:1775px;top:284px;width:21px;height:21px;line-height:22px;font-weight:bold;font-size:11px">...</div>
<div class="a" style="left:1652px;top:310px;width:118px;height:22px;background:#fff;border:1px solid #dedede;border-radius:2px;line-height:20px;padding-left:4px;color:#111;font-size:12px">None</div>
<svg class="a" style="left:1755px;top:318px" width="11" height="7"><path d="M1 1l4.5 4.5L10 1" fill="none" stroke="#444" stroke-width="1"/></svg>
<div class="rl" style="left:1448px;width:200px;top:314px;font-size:11.8px;line-height:14px">Marker Type</div>
<div class="a" style="left:1652px;top:337px;width:118px;height:21px;background:#fff;border:1px solid #dedede;border-radius:2px;line-height:19px;padding-left:4px;color:#111;font-size:12px">black</div>
<svg class="a" style="left:1755px;top:344px" width="11" height="7"><path d="M1 1l4.5 4.5L10 1" fill="none" stroke="#444" stroke-width="1"/></svg>
<div class="rl" style="left:1448px;width:200px;top:341px;font-size:11.8px;line-height:14px">Marker Color</div>
<div class="a" style="left:1545px;top:361px;width:353px;height:11px;overflow:hidden"><div class="rl" style="left:0;width:103px;top:4px;font-size:11.8px;line-height:14px">LOD</div><div class="a" style="left:106px;top:4px;width:13px;height:13px;border:1px solid #777;border-radius:2px;background:#fff"></div></div>
<div class="a" style="left:1545px;top:373px;width:370px;height:1px;background:#d8d8d8"></div>
<div class="a" style="left:1540px;top:378px;width:380px;height:3px;background:#f0f0f0"></div>
<div class="dh" style="left:1540px;top:381px;width:380px"><span>Foliage</span><i class="dx" style="left:364px"></i></div>
<div class="a" style="left:1540px;top:399px;width:380px;height:40px;background:#f0f0f0;border-left:1px solid #a8a8a8;border-right:1px solid #a8a8a8;border-bottom:1px solid #a8a8a8"></div>
<div class="a" style="left:1543px;top:401px;width:51px;height:23px;background:#f9f9f9;border:1px solid #e3e3e3;border-bottom:none;text-align:center;line-height:23px;color:#111;font-size:12px">Height</div>
<div class="a" style="left:1594px;top:403px;width:49px;height:21px;background:#f0f0f0;border:1px solid #e3e3e3;border-bottom:none;text-align:center;line-height:21px;color:#111;font-size:12px">Texture</div>
<div class="a" style="left:1643px;top:403px;width:47px;height:21px;background:#f0f0f0;border:1px solid #e3e3e3;border-bottom:none;text-align:center;line-height:21px;color:#111;font-size:12px">Mesh</div>
<div class="a" style="left:1690px;top:403px;width:50px;height:21px;background:#f0f0f0;border:1px solid #e3e3e3;border-bottom:none;text-align:center;line-height:21px;color:#111;font-size:12px">Foliage</div>
<div class="a" style="left:1740px;top:403px;width:45px;height:21px;background:#f0f0f0;border:1px solid #e3e3e3;border-bottom:none;text-align:center;line-height:21px;color:#111;font-size:12px">Info</div>
<div class="a" style="left:1785px;top:403px;width:128px;height:21px;background:#f0f0f0;border:1px solid #e3e3e3;border-bottom:none;text-align:center;line-height:21px;color:#111;font-size:12px">Procedural Placement</div>
<div class="a" style="left:1542px;top:424px;width:361px;height:13px;background:#fff;overflow:hidden"><svg class="a" style="left:5px;top:6px" width="11" height="7"><path d="M1 1l4.5 4.5L10 1" fill="none" stroke="#666" stroke-width="1"/></svg><div class="t" style="left:22px;top:4px;font-size:12px;color:#111">Brush</div></div>
<div class="a" style="left:1540px;top:439px;width:380px;height:4px;background:#f0f0f0"></div>
<div class="dh" style="left:1540px;top:443px;width:380px"><span>Material Editing</span><i class="dx" style="left:364px"></i></div>
<div class="a" style="left:1540px;top:461px;width:380px;height:282px;background:#f0f0f0;border-left:1px solid #a8a8a8;border-right:1px solid #a8a8a8;border-bottom:1px solid #a8a8a8"></div>
<div class="a" style="left:1903px;top:461px;width:1px;height:265px;background:#fafafa"></div>
<div class="a" style="left:1910px;top:528px;width:2px;height:130px;background:#6f6f6f"></div>
<div class="a" style="left:1664px;top:464px;width:237px;height:20px;background:#eeeeee;border:1px solid #e2e2e2;line-height:18px;text-align:center;color:#111;font-size:11.5px"></div>
<div class="rl" style="left:1460px;width:200px;top:467px;font-size:11.8px;line-height:14px">Slot Name</div>
<div class="a" style="left:1664px;top:492px;width:193px;height:19px;background:#eeeeee;border:1px solid #e2e2e2;line-height:17px;text-align:center;color:#111;font-size:11.5px"></div>
<div class="rl" style="left:1460px;width:200px;top:495px;font-size:11.8px;line-height:14px">Diffuse Map</div>
<div class="a" style="left:1863px;top:492px;width:18px;height:19px;background:#f5f5f5;border-radius:2px;font-size:10px;line-height:21px;text-align:center;color:#222">...</div>
<svg class="a" style="left:1888px;top:495px" width="14" height="14"><path d="M2 12Q6 7 13 1M3 2q5 4 9 10" fill="none" stroke="#e08a8a" stroke-width="1.6"/></svg>
<div class="a" style="left:1664px;top:519px;width:71px;height:21px;background:#eeeeee;border:1px solid #e2e2e2;line-height:19px;text-align:center;color:#111;font-size:11.5px">0</div>
<div class="a" style="left:1738px;top:519px;width:70px;height:21px;background:#eeeeee;border:1px solid #e2e2e2;line-height:19px;text-align:center;color:#111;font-size:11.5px">0</div>
<div class="a" style="left:1812px;top:519px;width:70px;height:21px;background:#eeeeee;border:1px solid #e2e2e2;line-height:19px;text-align:center;color:#111;font-size:11.5px">0</div>
<div class="rl" style="left:1460px;width:200px;top:523px;font-size:11.8px;line-height:14px">Diffuse Color</div>
<div class="a" style="left:1664px;top:519px;width:2px;height:21px;background:#e0502a"></div>
<div class="a" style="left:1738px;top:519px;width:2px;height:21px;background:#3bb04a"></div>
<div class="a" style="left:1812px;top:519px;width:2px;height:21px;background:#1e63d0"></div>
<div class="a" style="left:1887px;top:519px;width:15px;height:21px;background:#f5f5f5;border-radius:2px;font-size:10px;line-height:23px;text-align:center;color:#222">...</div>
<div class="a" style="left:1664px;top:548px;width:193px;height:19px;background:#eeeeee;border:1px solid #e2e2e2;line-height:17px;text-align:center;color:#111;font-size:11.5px"></div>
<div class="rl" style="left:1460px;width:200px;top:551px;font-size:11.8px;line-height:14px">Gloss Map</div>
<div class="a" style="left:1863px;top:548px;width:18px;height:19px;background:#f5f5f5;border-radius:2px;font-size:10px;line-height:21px;text-align:center;color:#222">...</div>
<svg class="a" style="left:1888px;top:551px" width="14" height="14"><path d="M2 12Q6 7 13 1M3 2q5 4 9 10" fill="none" stroke="#e08a8a" stroke-width="1.6"/></svg>
<div class="a" style="left:1664px;top:574px;width:71px;height:22px;background:#eeeeee;border:1px solid #e2e2e2;line-height:20px;text-align:center;color:#111;font-size:11.5px">0</div>
<div class="rl" style="left:1460px;width:200px;top:578px;font-size:11.8px;line-height:14px">Smoothness</div>
<div class="a" style="left:1664px;top:601px;width:71px;height:22px;background:#eeeeee;border:1px solid #e2e2e2;line-height:20px;text-align:center;color:#111;font-size:11.5px">0</div>
<div class="rl" style="left:1460px;width:200px;top:605px;font-size:11.8px;line-height:14px">Metalness</div>
<div class="a" style="left:1664px;top:630px;width:193px;height:19px;background:#eeeeee;border:1px solid #e2e2e2;line-height:17px;text-align:center;color:#111;font-size:11.5px"></div>
<div class="rl" style="left:1460px;width:200px;top:633px;font-size:11.8px;line-height:14px">Normal Map</div>
<div class="a" style="left:1863px;top:630px;width:18px;height:19px;background:#f5f5f5;border-radius:2px;font-size:10px;line-height:21px;text-align:center;color:#222">...</div>
<svg class="a" style="left:1888px;top:633px" width="14" height="14"><path d="M2 12Q6 7 13 1M3 2q5 4 9 10" fill="none" stroke="#e08a8a" stroke-width="1.6"/></svg>
<div class="a" style="left:1664px;top:656px;width:71px;height:22px;background:#eeeeee;border:1px solid #e2e2e2;line-height:20px;text-align:center;color:#111;font-size:11.5px">0</div>
<div class="rl" style="left:1460px;width:200px;top:660px;font-size:11.8px;line-height:14px">Bump Depth</div>
<div class="a" style="left:1664px;top:685px;width:193px;height:19px;background:#eeeeee;border:1px solid #e2e2e2;line-height:17px;text-align:center;color:#111;font-size:11.5px"></div>
<div class="rl" style="left:1460px;width:200px;top:688px;font-size:11.8px;line-height:14px">Emissive Map</div>
<div class="a" style="left:1863px;top:685px;width:18px;height:19px;background:#f5f5f5;border-radius:2px;font-size:10px;line-height:21px;text-align:center;color:#222">...</div>
<svg class="a" style="left:1888px;top:688px" width="14" height="14"><path d="M2 12Q6 7 13 1M3 2q5 4 9 10" fill="none" stroke="#e08a8a" stroke-width="1.6"/></svg>
<div class="rl" style="left:1460px;width:200px;top:711px;font-size:11.8px;line-height:14px">Alpha Blending</div>
<div class="a" style="left:1663px;top:712px;width:13px;height:13px;border:1px solid #8a8a8a;border-radius:2px;background:#fbfbfb"></div>
<div class="a" style="left:1542px;top:726px;width:361px;height:1px;background:#fafafa"></div>
<div class="a" style="left:1558px;top:732px;width:316px;height:3px;background:#7a7a7a;border-radius:1px"></div>
<div class="a" style="left:0;top:743px;width:1920px;height:5px;background:#f0f0f0"></div>
<div class="dh" style="left:0;top:748px;width:1920px;height:17px"><span style="left:4px;top:1px">Console</span><i class="dx" style="left:1904px;top:3px"></i></div>
<div class="a" style="left:0;top:765px;width:1920px;height:187px;background:#f0f0f0;border-left:1px solid #a8a8a8;border-right:1px solid #a8a8a8;overflow:hidden">
<div class="t" style="left:8px;top:-11px;font-size:11.8px;color:#111">Validate field 'field30' (Farmland '30')</div>
<div class="t" style="left:8px;top:4px;font-size:11.8px;color:#111">Validate field 'field31' (Farmland '31')</div>
<div class="t" style="left:8px;top:19px;font-size:11.8px;color:#111">Validate field 'field32' (Farmland '32')</div>
<div class="t" style="left:8px;top:34px;font-size:11.8px;color:#111">Validate field 'field33' (Farmland '33')</div>
<div class="t" style="left:2px;top:49px;font-size:11.8px;color:#111">Finished Field Validation</div>
<div class="t" style="left:2px;top:64px;font-size:11.8px;color:#111">Activated field debug rendering</div>
<div class="t" style="left:2px;top:79px;font-size:11.8px;color:#111">Start Field Validation</div>
<div class="t" style="left:8px;top:94px;font-size:11.8px;color:#111">Validate field 'field1' (Farmland '1')</div>
<div class="t" style="left:8px;top:109px;font-size:11.8px;color:#111">Validate field 'field2' (Farmland '2')</div>
<div class="t" style="left:8px;top:124px;font-size:11.8px;color:#111">Validate field 'field3' (Farmland '3')</div>
<div class="t" style="left:14px;top:139px;font-size:11.8px;color:#111">Adjusted field note name from 'field3 25.84 ha' to 'field3 25.67 ha'</div>
<div class="t" style="left:8px;top:154px;font-size:11.8px;color:#111">Validate field 'field4' (Farmland '4')</div>
<div class="t" style="left:8px;top:169px;font-size:11.8px;color:#111">Validate field 'field5' (Farmland '5')</div>
<div class="a" style="left:1903px;top:0;width:1px;height:187px;background:#fafafa"></div>
<div class="a" style="left:1909px;top:80px;width:2px;height:27px;background:#6f6f6f"></div>
</div>
<div class="a" style="left:0;top:952px;width:1920px;height:57px;background:#fff;border-left:1px solid #a8a8a8;border-right:1px solid #a8a8a8;border-bottom:1px solid #a8a8a8"></div>
<div class="a" style="left:1px;top:952px;width:64px;height:56px;background:#f0f0f0"></div>
<div class="a" style="left:65px;top:952px;width:16px;height:56px;background:repeating-linear-gradient(90deg,#f4f4f4 0 1px,#fff 1px 2px)"></div>
<div class="t" style="left:31px;top:953px;font-size:11.5px;color:#333;font-family:'Liberation Mono',monospace">1</div>
<div class="a" style="left:0;top:1009px;width:1920px;height:23px;background:#f0f0f0"></div>
<div class="t" style="left:3px;top:1015px;font-size:11.8px;color:#111">Ready</div>
<div class="a" style="left:159px;top:1011px;width:1px;height:19px;background:#d0d0d0"></div>
<div class="t" style="left:1746px;top:1015px;font-size:11.8px;color:#111">NavSpeed 140 +/-</div>
<!-- taskbar -->
<div class="a" style="left:0;top:1032px;width:1920px;height:48px;background:linear-gradient(90deg,#1d1d1d 0px,#202020 900px,#242424 1050px,#461822 1072px,#461722 1200px,#2d1e21 1215px,#2d1e21 1250px,#451722 1267px,#461822 1345px,#2a2a2a 1372px,#282828 1760px,#3a1a22 1835px,#431a24 1920px)"></div><div class="a" style="left:0;top:1032px;width:1920px;height:1px;background:#3c3c3c"></div>

<!-- windows logo -->
<div class="a" style="left:21px;top:1044px;width:11px;height:11px;background:linear-gradient(135deg,#7fdcff,#2aa8f0)"></div>
<div class="a" style="left:33px;top:1044px;width:11px;height:11px;background:linear-gradient(135deg,#6ad4ff,#1e9ae8)"></div>
<div class="a" style="left:21px;top:1056px;width:11px;height:11px;background:linear-gradient(135deg,#5ccdfd,#1a94e6)"></div>
<div class="a" style="left:33px;top:1056px;width:11px;height:11px;background:linear-gradient(135deg,#4ec4fb,#1288e0)"></div>
<!-- search -->
<svg class="a" style="left:65px;top:1044px" width="24" height="24"><circle cx="10" cy="10" r="8" fill="#555" stroke="#e8e8e8" stroke-width="2"/><path d="M16 16l6 6" stroke="#e8e8e8" stroke-width="2.4" stroke-linecap="round"/></svg>
<!-- task view -->
<div class="a" style="left:109px;top:1052px;width:18px;height:15px;background:#6a6a6a"></div>
<div class="a" style="left:115px;top:1045px;width:18px;height:16px;background:#f0f0f0"></div>
<div class="a" style="left:115px;top:1052px;width:12px;height:9px;background:#bdbdbd"></div>
<!-- explorer -->
<svg class="a" style="left:152px;top:1044px" width="26" height="24"><path d="M1 3h8l2 2h14v18H1z" fill="#f2c53d"/><path d="M1 7h24v16H1z" fill="#fbd863"/><rect x="6" y="15" width="14" height="8" rx="1" fill="#1a6fc8"/></svg>
<div class="a" style="left:161px;top:1072px;width:6px;height:3px;border-radius:2px;background:#9a9a9a"></div>
<!-- chrome -->
<svg class="a" style="left:196px;top:1044px" width="26" height="26"><circle cx="12" cy="13" r="12" fill="#e8453c"/><path d="M12 13L1.6 19A12 12 0 0 0 12 25z" fill="#34a853"/><path d="M12 13L12 25A12 12 0 0 0 22.4 7z" fill="#fbbc05"/><path d="M12 13L22.4 7A12 12 0 0 0 12 1z" fill="#e8453c"/><circle cx="12" cy="13" r="5.5" fill="#fff"/><circle cx="12" cy="13" r="4.3" fill="#4285f4"/></svg>
<svg class="a" style="left:210px;top:1039px" width="17" height="17"><circle cx="8.5" cy="8.5" r="8" fill="#fff"/><circle cx="8.5" cy="8.5" r="6.5" fill="#c0392b"/><path d="M3 7c1-5 10-5 11 0v3H3z" fill="#222"/><rect x="5" y="6" width="7" height="2" fill="#eee"/></svg>
<div class="a" style="left:206px;top:1072px;width:6px;height:3px;border-radius:2px;background:#9a9a9a"></div>
<!-- giants active -->
<div class="a" style="left:233px;top:1036px;width:39px;height:40px;background:#2d2d2d;border-radius:4px"></div>
<div class="a" style="left:242px;top:1044px;width:21px;height:24px;background:linear-gradient(#ffd23f,#f4a81c);border-radius:2px"></div>
<svg class="a" style="left:242px;top:1044px" width="21" height="24"><path d="M5.5 5.5H17.5M11 12H16.5V18.5H5.5" fill="none" stroke="#fffbe8" stroke-width="3" stroke-linecap="round" stroke-linejoin="round"/></svg>
<div class="a" style="left:245px;top:1072px;width:16px;height:3px;border-radius:2px;background:#4cc2ff"></div>
<!-- tray -->
<div class="a" style="left:1680px;top:1048px;width:16px;height:16px;background:#141814"></div>
<svg class="a" style="left:1680px;top:1048px" width="16" height="16"><path d="M2 8c3-4 9-4 12 0-3 4-9 4-12 0z" fill="none" stroke="#76b900" stroke-width="1.6"/><circle cx="8" cy="8" r="2" fill="#76b900"/></svg>
<svg class="a" style="left:1712px;top:1047px" width="18" height="18"><path d="M8 1l7 3v5c0 4-3 7-7 8-4-1-7-4-7-8V4z" fill="#3a9ae0"/><path d="M8 1l7 3v5c0 4-3 7-7 8z" fill="#66b8f0"/><path d="M12 9l5 8H7z" fill="#f4c20d"/><path d="M12 12v2.5M12 15.5v.8" stroke="#222" stroke-width="1"/></svg>
<div class="t" style="left:1746px;top:1050px;font-size:12px;color:#fff">ENG</div>
<svg class="a" style="left:1788px;top:1047px" width="17" height="18"><rect x="1" y="3" width="11" height="9" fill="none" stroke="#fff" stroke-width="1.2"/><path d="M4 15h6M7 12v3" stroke="#fff" stroke-width="1.2"/><rect x="12" y="1" width="3" height="5" fill="none" stroke="#fff"/><path d="M13.5 6v11" stroke="#fff"/></svg>
<svg class="a" style="left:1812px;top:1047px" width="17" height="17"><path d="M1 6h3l4-4v13l-4-4H1z" fill="none" stroke="#fff" stroke-width="1.1"/><path d="M10.5 5.5q2 3 0 6M12.5 3.5q3.5 5 0 10M14.5 1.5q5 7 0 14" fill="none" stroke="#fff" stroke-width="1.1"/></svg>
<div class="t" style="left:1840px;top:1040px;width:60px;text-align:right;font-size:12px;color:#fff">7:33</div>
<div class="t" style="left:1840px;top:1056px;width:60px;text-align:right;font-size:12px;color:#fff">22.03.2026</div>

<!-- Field Toolkit window -->
<div class="a" style="left:75px;top:88px;width:621px;height:561px;background:#f0f0f0;border:1px solid #adadad;border-radius:8px;box-shadow:0 4px 18px rgba(0,0,0,.28);overflow:hidden">
<div class="a" style="left:0;top:0;width:621px;height:29px;background:#f3f3f3"></div>
</div>
<div class="t" style="left:84px;top:96px;color:#9a9a9a;font-size:12px">Field Toolkit</div>
<div class="a" style="left:577px;top:102px;width:10px;height:1px;background:#8a8a8a"></div>
<div class="a" style="left:622px;top:97px;width:10px;height:10px;border:1px solid #dcdcdc"></div>
<svg class="a" style="left:668px;top:97px" width="11" height="11"><path d="M.5 .5l10 10M10.5 .5l-10 10" stroke="#8a8a8a" stroke-width="1"/></svg>
<div class="lbl" style="left:86px;top:133px;line-height:14px">Creation</div>
<div class="btn" style="left:317px;top:129px;width:368px">Create Field</div>
<div class="sep" style="left:86px;top:158px;width:599px"></div>
<div class="lbl" style="left:86px;top:170px;line-height:14px">Adjust Field Pivots</div>
<div class="btn" style="left:317px;top:166px;width:183px">Selected Field</div>
<div class="btn" style="left:503px;top:166px;width:182px">All Fields</div>
<div class="sep" style="left:86px;top:195px;width:599px"></div>
<div class="lbl" style="left:86px;top:207px;line-height:14px">Align Polygon Points To Terrain</div>
<div class="btn" style="left:317px;top:203px;width:183px">Selected Field</div>
<div class="btn" style="left:503px;top:203px;width:182px">All Fields</div>
<div class="sep" style="left:86px;top:232px;width:599px"></div>
<div class="lbl" style="left:86px;top:244px;line-height:14px">Rename Polygon Points</div>
<div class="btn" style="left:317px;top:240px;width:183px">Selected Field</div>
<div class="btn" style="left:503px;top:240px;width:182px">All Fields</div>
<div class="sep" style="left:86px;top:269px;width:599px"></div>
<div class="lbl" style="left:86px;top:281px;line-height:14px">Rename Fields</div>
<div class="btn" style="left:317px;top:277px;width:183px">Selected Field</div>
<div class="btn" style="left:503px;top:277px;width:182px">All Fields</div>
<div class="sep" style="left:86px;top:306px;width:599px"></div>
<div class="lbl" style="left:86px;top:318px;line-height:14px">Repaint Fields</div>
<div class="btn" style="left:317px;top:314px;width:183px">Selected Field</div>
<div class="btn" style="left:503px;top:314px;width:182px">All Fields</div>
<div class="sep" style="left:86px;top:343px;width:599px"></div>
<div class="lbl" style="left:86px;top:355px;line-height:14px">Repaint Fields to Farmland</div>
<div class="btn" style="left:317px;top:351px;width:183px">Selected Field</div>
<div class="btn" style="left:503px;top:351px;width:182px">All Fields</div>
<div class="sep" style="left:86px;top:380px;width:599px"></div>
<div class="lbl" style="left:86px;top:392px;line-height:14px">Clear Fields</div>
<div class="btn" style="left:317px;top:388px;width:183px">Selected Field</div>
<div class="btn" style="left:503px;top:388px;width:182px">Map</div>
<div class="sep" style="left:86px;top:417px;width:599px"></div>
<div class="lbl" style="left:86px;top:429px;line-height:14px">Clear Fruits</div>
<div class="btn" style="left:317px;top:425px;width:183px">Selected Field</div>
<div class="btn" style="left:503px;top:425px;width:182px">All Fields</div>
<div class="sep" style="left:86px;top:454px;width:599px"></div>
<div class="lbl" style="left:86px;top:466px;line-height:14px">Convert old</div>
<div class="btn" style="left:317px;top:462px;width:183px">Selected Field</div>
<div class="btn" style="left:503px;top:462px;width:182px">All Fields</div>
<div class="sep" style="left:86px;top:491px;width:599px"></div>
<div class="lbl" style="left:86px;top:503px;line-height:14px">Validate</div>
<div class="btn" style="left:317px;top:499px;width:183px">Selected Field</div>
<div class="btn" style="left:503px;top:499px;width:182px">All Fields</div>
<div class="sep" style="left:86px;top:528px;width:599px"></div>
<div class="lbl" style="left:86px;top:540px;line-height:14px">Field Size</div>
<div class="btn" style="left:317px;top:536px;width:121px">Get Total</div>
<div class="btn" style="left:440px;top:536px;width:121px">Update Field</div>
<div class="btn" style="left:563px;top:536px;width:122px">Update All Fields</div>
<div class="sep" style="left:86px;top:565px;width:599px"></div>
<div class="lbl" style="left:86px;top:577px;line-height:14px">Field Notes</div>
<div class="btn" style="left:317px;top:573px;width:368px">Toggle Visibility All</div>
<div class="sep" style="left:86px;top:602px;width:599px"></div>
<div class="lbl" style="left:86px;top:614px;line-height:14px">Debug</div>
<div class="btn" style="left:317px;top:610px;width:368px">Toggle Debug Rendering</div>
<!-- Field Size dialog -->
<div class="a" style="left:498px;top:271px;width:400px;height:122px;background:#f0f0f0;border-radius:8px;box-shadow:0 6px 22px rgba(0,0,0,.35);overflow:hidden;border:1px solid #c8c0c4">
<div class="a" style="left:0;top:0;width:400px;height:29px;background:#f8eef0"></div>
<div class="a" style="left:0;top:29px;width:400px;height:47px;background:#fff;border-bottom:1px solid #8a8a8a"></div>
</div>
<div class="t" style="left:506px;top:279px;font-size:12px;color:#1a1a1a">Field Size</div>
<div class="a" style="left:779px;top:285px;width:10px;height:1px;background:#111"></div>
<div class="a" style="left:824px;top:280px;width:10px;height:10px;border:1px solid #c8c8c8"></div>
<svg class="a" style="left:869px;top:279px" width="12" height="12"><path d="M1 1l10 10M11 1L1 11" stroke="#111" stroke-width="1.1"/></svg>
<div class="t" style="left:513px;top:317px;font-size:11.5px;color:#111">Total field size is 801.89 ha</div>
<div class="btn" style="left:800px;top:360px;width:76px;height:21px;line-height:19px">Ok</div>


</body></html>
